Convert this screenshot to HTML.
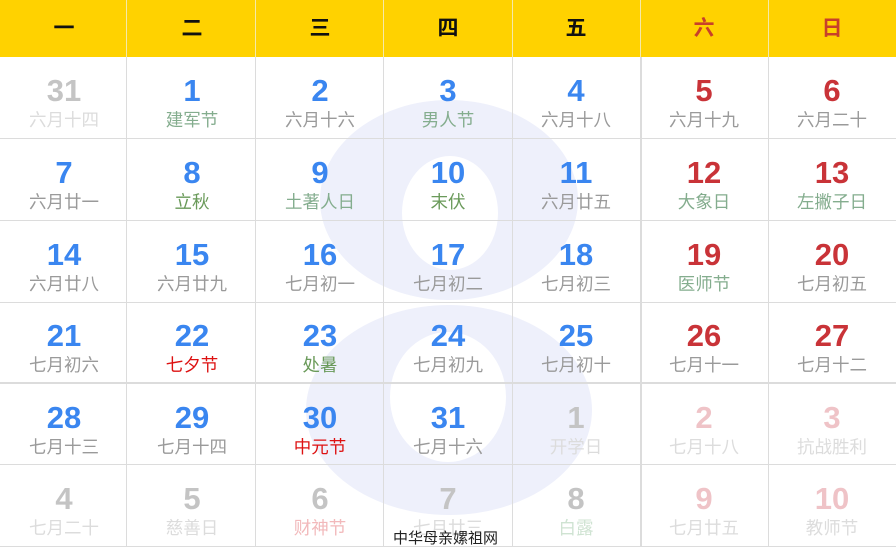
<!DOCTYPE html>
<html><head><meta charset="utf-8"><style>
*{margin:0;padding:0;box-sizing:border-box}
body{width:896px;height:548px;overflow:hidden;background:#fff;position:relative;font-family:"Liberation Sans","Noto Sans CJK SC",sans-serif}
#hd{position:absolute;left:0;top:0;width:896px;height:57px;background:#ffd200}
.h{position:absolute;top:0;height:57px;width:128px;text-align:center;line-height:57px;font-size:21px;font-weight:bold;color:#111}
.h.r{color:#c8402a}
.vl{position:absolute;width:1px;background:#dcdcdc}
.hl{position:absolute;height:1px;left:0;width:896px;background:#dcdcdc}
.c{position:absolute;width:128px;text-align:center}
.n{position:absolute;left:0;width:128px;font-size:31px;font-weight:bold;line-height:36px;top:16px;color:#3a86f0}
.l{position:absolute;left:0;width:128px;font-size:17.5px;line-height:22px;top:52px;color:#9a9a9a}
.red .n{color:#c93338}
.fa .n{color:#c4c4c4}.fa .l{color:#dcdcdc}
.fr .n{color:#efc3c7}.fr .l{color:#dcdcdc}
.g .l{color:#84ad8e}.g2 .l{color:#6a9a5a}.rr .l{color:#dd1111}
.fg .l{color:#cfe3d2}.fp .l{color:#f2b9bb}
#wm{position:absolute;left:393px;top:530px;font-size:15px;color:#222;line-height:18px}
</style></head><body>
<svg width="896" height="548" style="position:absolute;left:0;top:0">
<path fill="#eef0fb" fill-rule="evenodd" d="M320,200a129,100 0 1,0 258,0a129,100 0 1,0 -258,0Z M402,213a48,57 0 1,0 96,0a48,57 0 1,0 -96,0Z"/>
<path fill="#eef0fb" fill-rule="evenodd" d="M306,410a143,105 0 1,0 286,0a143,105 0 1,0 -286,0Z M390,397a58,65 0 1,0 116,0a58,65 0 1,0 -116,0Z"/>
</svg>
<div id="hd"></div>
<div class="h" style="left:0">一</div><div class="h" style="left:128px">二</div><div class="h" style="left:256px">三</div><div class="h" style="left:384px">四</div><div class="h" style="left:512px">五</div><div class="h r" style="left:640px">六</div><div class="h r" style="left:768px">日</div>
<div class="vl" style="left:126px;top:0;height:57px;background:#f5e9a8"></div><div class="vl" style="left:255px;top:0;height:57px;background:#f5e9a8"></div><div class="vl" style="left:383px;top:0;height:57px;background:#f5e9a8"></div><div class="vl" style="left:512px;top:0;height:57px;background:#f5e9a8"></div><div class="vl" style="left:640px;top:0;height:57px;background:#f5e9a8"></div><div class="vl" style="left:768px;top:0;height:57px;background:#f5e9a8"></div>
<div class="vl" style="left:126px;top:57px;height:490px"></div><div class="vl" style="left:255px;top:57px;height:490px"></div><div class="vl" style="left:383px;top:57px;height:490px"></div><div class="vl" style="left:512px;top:57px;height:490px"></div><div class="vl" style="left:640px;top:57px;height:490px;width:2px"></div><div class="vl" style="left:768px;top:57px;height:490px"></div>
<div class="hl" style="top:138px"></div><div class="hl" style="top:220px"></div><div class="hl" style="top:302px"></div><div class="hl" style="top:382px;height:2px"></div><div class="hl" style="top:464px"></div><div class="hl" style="top:546px"></div>

<div class="c fa" style="left:0;top:57px"><div class="n">31</div><div class="l">六月十四</div></div>
<div class="c g" style="left:128px;top:57px"><div class="n">1</div><div class="l">建军节</div></div>
<div class="c" style="left:256px;top:57px"><div class="n">2</div><div class="l">六月十六</div></div>
<div class="c g" style="left:384px;top:57px"><div class="n">3</div><div class="l">男人节</div></div>
<div class="c" style="left:512px;top:57px"><div class="n">4</div><div class="l">六月十八</div></div>
<div class="c red" style="left:640px;top:57px"><div class="n">5</div><div class="l">六月十九</div></div>
<div class="c red" style="left:768px;top:57px"><div class="n">6</div><div class="l">六月二十</div></div>

<div class="c" style="left:0;top:139px"><div class="n">7</div><div class="l">六月廿一</div></div>
<div class="c g2" style="left:128px;top:139px"><div class="n">8</div><div class="l">立秋</div></div>
<div class="c g" style="left:256px;top:139px"><div class="n">9</div><div class="l">土著人日</div></div>
<div class="c g2" style="left:384px;top:139px"><div class="n">10</div><div class="l">末伏</div></div>
<div class="c" style="left:512px;top:139px"><div class="n">11</div><div class="l">六月廿五</div></div>
<div class="c red g" style="left:640px;top:139px"><div class="n">12</div><div class="l">大象日</div></div>
<div class="c red g" style="left:768px;top:139px"><div class="n">13</div><div class="l">左撇子日</div></div>

<div class="c" style="left:0;top:221px"><div class="n">14</div><div class="l">六月廿八</div></div>
<div class="c" style="left:128px;top:221px"><div class="n">15</div><div class="l">六月廿九</div></div>
<div class="c" style="left:256px;top:221px"><div class="n">16</div><div class="l">七月初一</div></div>
<div class="c" style="left:384px;top:221px"><div class="n">17</div><div class="l">七月初二</div></div>
<div class="c" style="left:512px;top:221px"><div class="n">18</div><div class="l">七月初三</div></div>
<div class="c red g" style="left:640px;top:221px"><div class="n">19</div><div class="l">医师节</div></div>
<div class="c red" style="left:768px;top:221px"><div class="n">20</div><div class="l">七月初五</div></div>

<div class="c" style="left:0;top:302px"><div class="n">21</div><div class="l">七月初六</div></div>
<div class="c rr" style="left:128px;top:302px"><div class="n">22</div><div class="l">七夕节</div></div>
<div class="c g2" style="left:256px;top:302px"><div class="n">23</div><div class="l">处暑</div></div>
<div class="c" style="left:384px;top:302px"><div class="n">24</div><div class="l">七月初九</div></div>
<div class="c" style="left:512px;top:302px"><div class="n">25</div><div class="l">七月初十</div></div>
<div class="c red" style="left:640px;top:302px"><div class="n">26</div><div class="l">七月十一</div></div>
<div class="c red" style="left:768px;top:302px"><div class="n">27</div><div class="l">七月十二</div></div>

<div class="c" style="left:0;top:384px"><div class="n">28</div><div class="l">七月十三</div></div>
<div class="c" style="left:128px;top:384px"><div class="n">29</div><div class="l">七月十四</div></div>
<div class="c rr" style="left:256px;top:384px"><div class="n">30</div><div class="l">中元节</div></div>
<div class="c" style="left:384px;top:384px"><div class="n">31</div><div class="l">七月十六</div></div>
<div class="c fa" style="left:512px;top:384px"><div class="n">1</div><div class="l">开学日</div></div>
<div class="c fr" style="left:640px;top:384px"><div class="n">2</div><div class="l">七月十八</div></div>
<div class="c fr" style="left:768px;top:384px"><div class="n">3</div><div class="l">抗战胜利</div></div>

<div class="c fa" style="left:0;top:465px"><div class="n">4</div><div class="l">七月二十</div></div>
<div class="c fa" style="left:128px;top:465px"><div class="n">5</div><div class="l">慈善日</div></div>
<div class="c fa fp" style="left:256px;top:465px"><div class="n">6</div><div class="l">财神节</div></div>
<div class="c fa" style="left:384px;top:465px"><div class="n">7</div><div class="l">七月廿三</div></div>
<div class="c fa fg" style="left:512px;top:465px"><div class="n">8</div><div class="l">白露</div></div>
<div class="c fr" style="left:640px;top:465px"><div class="n">9</div><div class="l">七月廿五</div></div>
<div class="c fr" style="left:768px;top:465px"><div class="n">10</div><div class="l">教师节</div></div>
<div id="wm">中华母亲嫘祖网</div>
</body></html>
